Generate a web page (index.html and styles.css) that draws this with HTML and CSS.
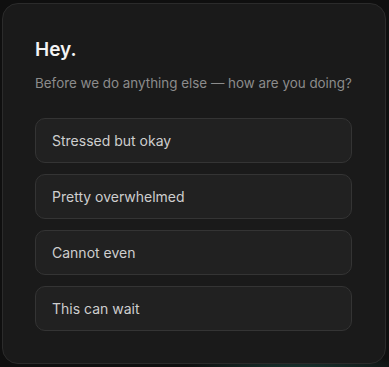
FILE: index.html
```html
<!DOCTYPE html>
<html lang="en">
<head>
    <meta charset="UTF-8">
    <meta name="viewport" content="width=device-width, initial-scale=1.0">
    <title>Check-in</title>
    <link rel="stylesheet" href="styles.css">
</head>
<body>
    <div class="card">
        <h1 class="title">Hey.</h1>
        <p class="subtitle">Before we do anything else — how are you doing?</p>

        <!-- mood options -->
        <div class="options">
            <button class="option">Stressed but okay</button>
            <button class="option">Pretty overwhelmed</button>
            <button class="option">Cannot even</button>
            <button class="option">This can wait</button>
        </div>
    </div>
</body>
</html>
```

FILE: styles.css
```css
html, body {
    height: 100%;
}
body {
    margin: 0;
    padding: 3px 3px 3px 2px;
    box-sizing: border-box;
    font-family: 'Inter', 'Liberation Sans', sans-serif;
    background-color: #0f0f0f;
    background-image: radial-gradient(ellipse 120px 20px at 300px 372px, rgba(40, 110, 100, 0.45), transparent);
}
.card {
    height: 100%;
    box-sizing: border-box;
    background-color: #1a1a1a;
    border: 1px solid #2b2b2b;
    border-radius: 16px;
    padding: 33px 33px 32px 32px;
}
.title {
    margin: 0;
    font-size: 19px;
    font-weight: 600;
    line-height: 26px;
    color: #f4f4f4;
}
.subtitle {
    margin: 10px 0 0;
    font-size: 13.4px;
    line-height: 20px;
    color: #8c8c8c;
    white-space: nowrap;
}
.options {
    display: flex;
    flex-direction: column;
    gap: 11px;
    margin-top: 25px;
}
.option {
    height: 45px;
    padding: 0 16px;
    text-align: left;
    font-family: inherit;
    font-size: 14px;
    color: #cecece;
    background-color: #212121;
    border: 1px solid #343434;
    border-radius: 10px;
    cursor: pointer;
}
.option:hover {
    background-color: #262626;
}
```
